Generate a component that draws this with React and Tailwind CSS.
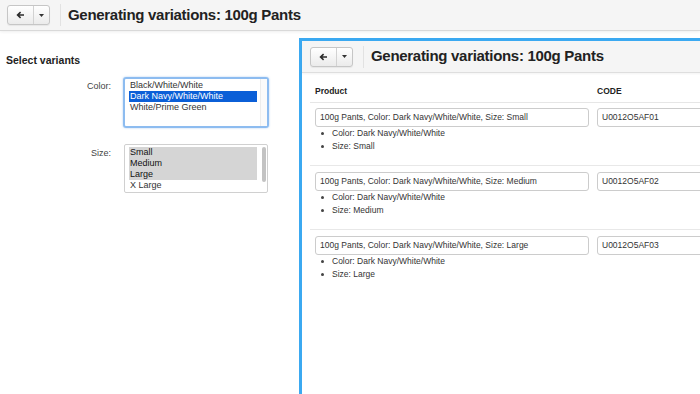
import React from 'react';

const ButtonGroup = () => (
  <div className="flex h-[20px] rounded-[3px] border border-[#c6c6c6] bg-gradient-to-b from-white to-[#ebebeb] shadow-[0_1px_1px_rgba(0,0,0,0.06)]">
    <div className="flex w-[25px] items-center justify-center">
      <svg width="9" height="8" viewBox="0 0 9 8">
        <path d="M8 4H1.8M4.6 1.2L1.6 4L4.6 6.8" fill="none" stroke="#2b2b2b" strokeWidth="1.6" />
      </svg>
    </div>
    <div className="flex w-[16px] items-center justify-center border-l border-[#d2d2d2]">
      <svg width="5" height="3" viewBox="0 0 5 3">
        <path d="M0 0H5L2.5 3Z" fill="#333" />
      </svg>
    </div>
  </div>
);

const Header = ({ className }) => (
  <div className={`flex items-center bg-[#f5f5f5] ${className}`}>
    <ButtonGroup />
    <div className="ml-[10px] h-[22px] w-px bg-[#e2e2e2]" />
    <h1 className="ml-[7px] text-[15px] font-bold tracking-[-0.3px] text-[#222]">
      Generating variations: 100g Pants
    </h1>
  </div>
);

const colors = ['Black/White/White', 'Dark Navy/White/White', 'White/Prime Green'];
const sizes = ['Small', 'Medium', 'Large', 'X Large', 'XX Large'];

const rows = [
  { size: 'Small', code: 'U0012O5AF01' },
  { size: 'Medium', code: 'U0012O5AF02' },
  { size: 'Large', code: 'U0012O5AF03' },
];

export default function App() {
  return (
    <div className="flex h-[394px] w-[700px] flex-col overflow-hidden bg-white font-['Liberation_Sans',Arial,sans-serif] text-[#333]">
      {/* Top bar */}
      <Header className="h-[31px] shrink-0 border-b border-[#d9d9d9] pl-[7px] shadow-[0_1px_3px_rgba(0,0,0,0.07)]" />

      <div className="flex flex-1">
        {/* Variant selection */}
        <div className="w-[299px] shrink-0 pl-[6px] pt-[23px]">
          <h2 className="text-[10.5px] font-bold leading-[13px] text-[#222]">Select variants</h2>

          <div className="mt-[10px] flex">
            <div className="w-[105px] pt-[3px] text-right text-[9px] leading-[12px] text-[#444]">Color:</div>
            <div className="ml-[12px] flex h-[51px] w-[146px] rounded-[3px] border-2 border-[#8dbcf0] shadow-[0_0_2px_rgba(80,150,230,0.5)]">
              <div className="ml-[4px] w-[128px] pt-[1px]">
                {colors.map((c, i) => (
                  <div
                    key={c}
                    className={`h-[11px] px-[1px] text-[9px] leading-[11px] ${
                      i === 1 ? 'bg-[#0b5fd7] text-white' : 'text-[#333]'
                    }`}
                  >
                    {c}
                  </div>
                ))}
              </div>
              <div className="ml-auto w-[7px] border-l border-[#ececec] bg-[#fafafa]" />
            </div>
          </div>

          <div className="mt-[16px] flex">
            <div className="w-[105px] pt-[3px] text-right text-[9px] leading-[12px] text-[#444]">Size:</div>
            <div className="ml-[13px] flex h-[49px] w-[144px] overflow-hidden rounded-[2px] border border-[#d0d0d0]">
              <div className="ml-[4px] w-[128px] pt-[2px]">
                {sizes.map((s, i) => (
                  <div
                    key={s}
                    className={`h-[11px] px-[1px] text-[9px] leading-[11px] ${
                      i < 3 ? 'bg-[#d5d5d5] text-[#111]' : 'text-[#333]'
                    }`}
                  >
                    {s}
                  </div>
                ))}
              </div>
              <div className="ml-[5px] mt-[2px] h-[35px] w-[4px] rounded-full bg-[#c3c3c3]" />
            </div>
          </div>
        </div>

        {/* Generated variations panel */}
        <div className="mt-[7px] w-[430px] shrink-0 border-l-[3px] border-t-[3px] border-[#3ba9f1] bg-white">
          <Header className="h-[32px] border-b border-[#dedede] pl-[8px] shadow-[0_1px_2px_rgba(0,0,0,0.05)]" />

          <div className="pl-[8px]">
            <div className="flex h-[30px] items-end border-b border-[#e6e6e6] pb-[6px] text-[8.5px] font-bold leading-[10px] text-[#222]">
              <div className="w-[287px] pl-[5px]">Product</div>
              <div>CODE</div>
            </div>

            {rows.map((r, i) => (
              <div
                key={r.code}
                className={`flex ${i === 0 ? 'pt-[5px]' : 'pt-[6px]'} ${
                  i < rows.length - 1 ? 'border-b border-[#e8e8e8] pb-[12px]' : ''
                }`}
              >
                <div className="w-[287px] pl-[5px]">
                  <div className="flex h-[19px] w-[274px] items-center rounded-[3px] border border-[#cccccc] px-[4px] text-[8.5px] text-[#333]">
                    100g Pants, Color: Dark Navy/White/White, Size: {r.size}
                  </div>
                  <ul className="text-[8.5px] leading-[13px] text-[#333]">
                    <li className="flex items-center">
                      <span className="ml-[6px] mr-[8px] h-[3px] w-[3px] rounded-full bg-[#444]" />
                      Color: Dark Navy/White/White
                    </li>
                    <li className="flex items-center">
                      <span className="ml-[6px] mr-[8px] h-[3px] w-[3px] rounded-full bg-[#444]" />
                      Size: {r.size}
                    </li>
                  </ul>
                </div>
                <div className="flex h-[19px] w-[130px] items-center rounded-[3px] border border-[#cccccc] px-[4px] text-[8.5px] text-[#333]">
                  {r.code}
                </div>
              </div>
            ))}
          </div>
        </div>
      </div>
    </div>
  );
}
